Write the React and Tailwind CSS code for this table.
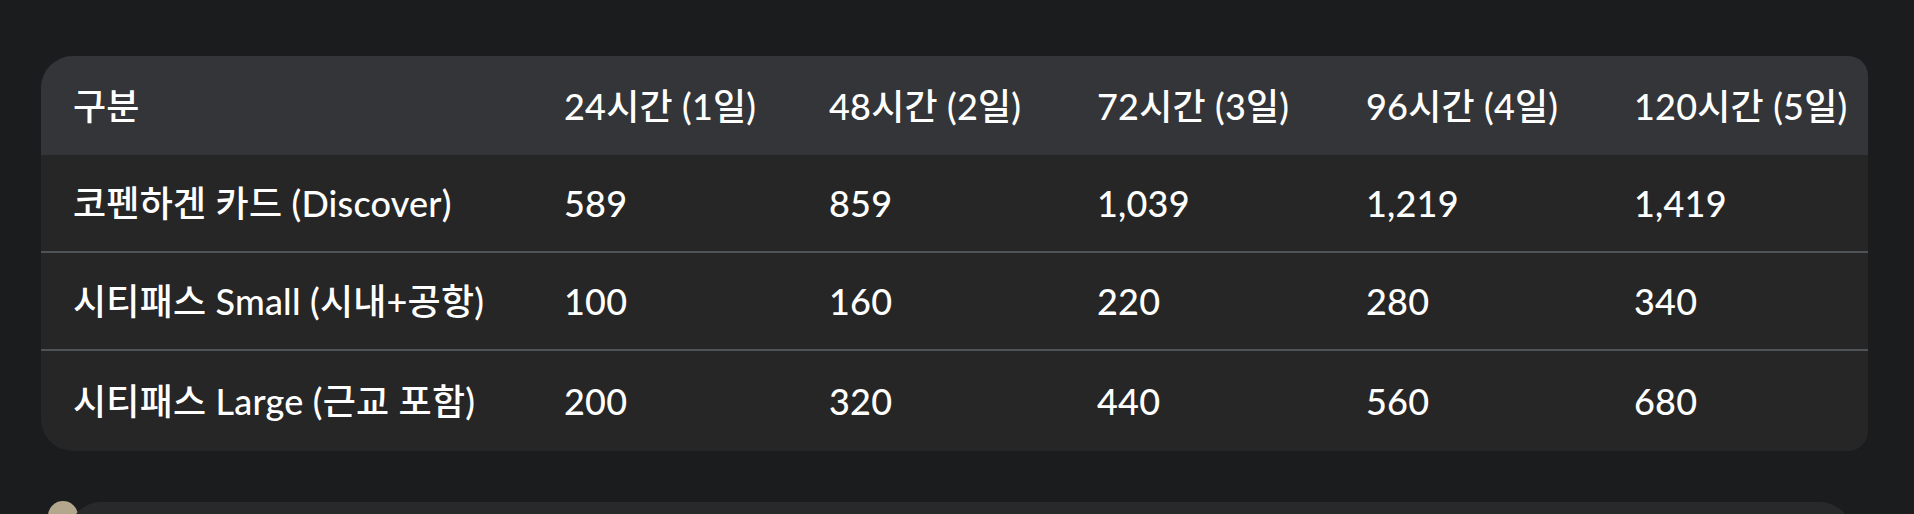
import React from 'react';

const columns = ['구분', '24시간 (1일)', '48시간 (2일)', '72시간 (3일)', '96시간 (4일)', '120시간 (5일)'];

const rows = [
  ['코펜하겐 카드 (Discover)', '589', '859', '1,039', '1,219', '1,419'],
  ['시티패스 Small (시내+공항)', '100', '160', '220', '280', '340'],
  ['시티패스 Large (근교 포함)', '200', '320', '440', '560', '680'],
];

const grid = 'grid grid-cols-[491px_265px_268px_269px_268px_266px] items-center';

export default function App() {
  return (
    <div
      className="min-h-screen bg-[#1b1c1e] pt-[56px] text-white overflow-hidden"
      style={{ fontFamily: 'Lato, "Noto Sans CJK KR", sans-serif' }}
    >
      {/* Table card */}
      <div className="ml-[41px] w-[1827px] overflow-hidden rounded-l-[32px] rounded-r-[20px] bg-[#262626]">
        <div className={`${grid} h-[99px] bg-[#333538]`}>
          {columns.map((c) => (
            <div key={c} className="pl-[32px] text-[36px] font-medium whitespace-nowrap tracking-[0.2px]">{c}</div>
          ))}
        </div>
        {rows.map((r, i) => (
          <div
            key={r[0]}
            className={`${grid} ${i < rows.length - 1 ? 'h-[98px] border-b-2 border-[#4f5355]' : 'h-[100px]'}`}
          >
            {r.map((cell, j) => (
              <div key={j} className="pl-[32px] text-[36px] font-medium whitespace-nowrap tracking-[0.2px]">{cell}</div>
            ))}
          </div>
        ))}
      </div>

      {/* Next message, cut off at the bottom */}
      <div className="relative mt-[51px] h-[60px]">
        <div className="absolute left-[48px] top-[-1px] w-[30px] h-[30px] rounded-full bg-[#b3a88d]" />
        <div className="relative ml-[69px] mr-[62px] h-full rounded-t-[32px] bg-[#28292b]" />
      </div>
    </div>
  );
}
